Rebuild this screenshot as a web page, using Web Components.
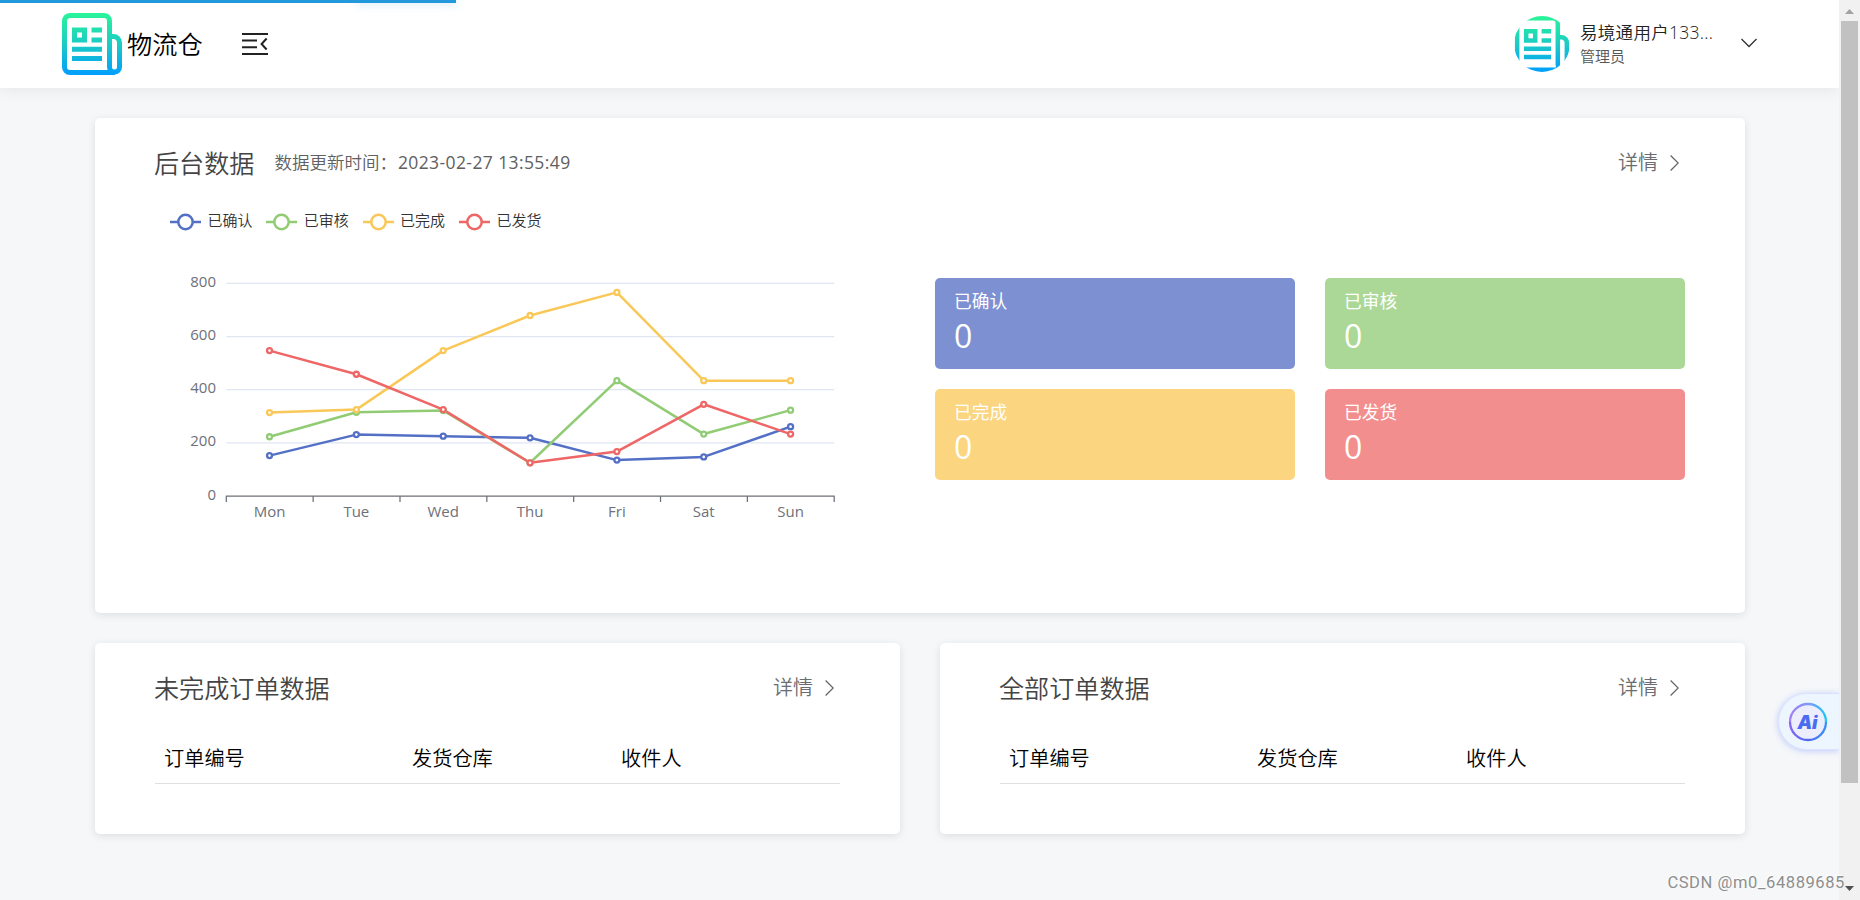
<!DOCTYPE html>
<html lang="zh-CN">
<head>
<meta charset="utf-8">
<title>物流仓</title>
<style>
  html, body {
    margin: 0;
    height: 100%;
  }
  body {
    overflow: hidden;
    background: #f5f7f9;
    color: #000;
    font-family: "Open Sans", "Noto Sans CJK SC", sans-serif;
    font-weight: 350;
    font-size: 20px;
  }
</style>
</head>
<body>
<wh-app></wh-app>

<script>
class WhLogo extends HTMLElement {
  constructor() {
    super();
    this.attachShadow({ mode: 'open' });
  }

  connectedCallback() {
    this.shadowRoot.innerHTML = `
      <style>
        :host {
          display: block;
          flex: none;
          overflow: hidden;
        }
        svg {
          display: block;
          width: 100%;
          height: 100%;
        }
      </style>
      <svg viewBox="${this.getAttribute('box') || '0 0 60 62'}">
        <defs>
          <linearGradient id="g" gradientUnits="userSpaceOnUse" x1="0" y1="0" x2="0" y2="62">
            <stop offset="0" stop-color="#2af598"/>
            <stop offset="0.5" stop-color="#1ccbc5"/>
            <stop offset="1" stop-color="#009efd"/>
          </linearGradient>
        </defs>
        <g fill="none" stroke="url(#g)" stroke-width="5">
          <path d="M47.5 59.5H8a5.5 5.5 0 0 1-5.5-5.5V8A5.5 5.5 0 0 1 8 2.5H42a5.5 5.5 0 0 1 5.5 5.5V54a5 5 0 0 0 10 0V29.5a6 6 0 0 0-6-6H47.5"/>
          <path d="M45 59.5H53"/>
        </g>
        <path fill="url(#g)" fill-rule="evenodd" d="M10 14.5H25V29.5H10ZM15 19.5V24.5H20V19.5ZM29.5 14.5H40V19.5H29.5ZM29.5 24.5H40V29.5H29.5ZM10 33.7H40V38.7H10ZM10 43H40V48H10Z"/>
      </svg>
    `;
  }
}

class WhHeader extends HTMLElement {
  constructor() {
    super();
    this.attachShadow({ mode: 'open' });
  }

  connectedCallback() {
    this.shadowRoot.innerHTML = `
      <style>
        :host {
          display: block;
          height: 88px;
          background: #fff;
          box-shadow: 0 2px 15px rgba(0, 0, 0, 0.07);
        }
        header {
          display: flex;
          align-items: center;
          height: 100%;
          box-sizing: border-box;
          padding: 0 82px 0 62px;
        }
        .logo {
          width: 60px;
          height: 62px;
        }
        .name {
          width: 75px;
          margin-left: 5px;
          font-size: 25.2px;
          line-height: 30px;
          white-space: nowrap;
        }
        .menu {
          margin-left: 40px;
          margin-top: -1px;
        }
        .user {
          display: flex;
          align-items: center;
          margin-left: auto;
        }
        .avatar {
          width: 56px;
          height: 56px;
          border-radius: 50%;
        }
        .info {
          width: 132px;
          margin: 0 29px 0 10px;
          white-space: nowrap;
        }
        .nick {
          font-size: 17.5px;
          line-height: 24px;
          letter-spacing: 0.3px;
          color: #222;
        }
        .role {
          font-size: 15px;
          line-height: 24px;
          color: #555;
        }
        .arrow {
          margin-top: -2px;
        }
      </style>
      <header>
        <wh-logo class="logo"></wh-logo>
        <span class="name">物流仓</span>
        <svg class="menu" width="26" height="24" viewBox="0 0 26 24" fill="none" stroke="#222" stroke-width="2">
          <path d="M0 2H26M0 8.5H15M0 15.3H15M0 22H26"/>
          <path d="M24.6 6.5L19.6 12L24.6 17.5"/>
        </svg>
        <div class="user">
          <wh-logo class="avatar" box="-1 0 62 62"></wh-logo>
          <div class="info">
            <div class="nick">易境通用户133...</div>
            <div class="role">管理员</div>
          </div>
          <svg class="arrow" width="16" height="10" viewBox="0 0 16 10" fill="none" stroke="#333" stroke-width="1.3">
            <path d="M.5 1L8 8.5L15.5 1"/>
          </svg>
        </div>
      </header>
    `;
  }
}

class WhCard extends HTMLElement {
  constructor() {
    super();
    this.attachShadow({ mode: 'open' });
  }

  connectedCallback() {
    this.shadowRoot.innerHTML = `
      <style>
        :host {
          display: block;
          box-sizing: border-box;
          padding: 29px 60px 0;
          background: #fff;
          border-radius: 5px;
          box-shadow: 0 2px 8px rgba(0, 0, 0, 0.1);
        }
        .head {
          display: flex;
          align-items: center;
          height: 32px;
        }
        h2 {
          margin: 0 1px 0 -1px;
          font-size: 25.1px;
          font-weight: inherit;
          line-height: 32px;
          color: #444;
        }
        .more {
          display: flex;
          align-items: center;
          gap: 12px;
          margin-left: auto;
          padding-right: 6px;
          line-height: 34px;
          color: #6b6d71;
        }
        .more svg {
          margin-top: -1px;
        }
      </style>
      <div class="head">
        <h2>${this.getAttribute('heading')}</h2>
        <slot name="note"></slot>
        <div class="more">
          <span>详情</span>
          <svg width="9" height="16" viewBox="0 0 9 16" fill="none" stroke="#606266" stroke-width="1.2">
            <path d="M.6 .5L8.2 8L.6 15.5"/>
          </svg>
        </div>
      </div>
      <slot></slot>
    `;
  }
}

const SERIES = [
  { name: '已确认', color: '#5470c6', data: [152, 231, 225, 219, 135, 147, 261] },
  { name: '已审核', color: '#91cc75', data: [223, 315, 322, 125, 434, 233, 323] },
  { name: '已完成', color: '#fac858', data: [314, 325, 547, 679, 766, 434, 434] },
  { name: '已发货', color: '#ee6666', data: [547, 458, 325, 125, 167, 345, 233] }
];
const DAYS = ['Mon', 'Tue', 'Wed', 'Thu', 'Fri', 'Sat', 'Sun'];

class WhLineChart extends HTMLElement {
  constructor() {
    super();
    this.attachShadow({ mode: 'open' });
  }

  connectedCallback() {
    const left = 71.3;
    const right = 679.2;
    const base = 256;
    const step = (right - left) / DAYS.length;
    const px = i => left + step * (i + 0.5) - 0.2;
    const py = v => base - v * 0.2658;

    const grid = [0, 200, 400, 600, 800].map(v => {
      const y = py(v);
      const line = v ? `<path d="M${left} ${y}H${right}" stroke="#e0e6f1" stroke-width="1.25"/>` : '';
      return `${line}<text x="61" y="${y + 3.5}" text-anchor="end">${v}</text>`;
    }).join('');

    const ticks = DAYS.concat('').map((d, i) => `M${left + step * i} ${base}v6`).join('');
    const labels = DAYS.map((d, i) => `<text x="${px(i)}" y="277" text-anchor="middle">${d}</text>`).join('');

    const lines = SERIES.map(s => `
      <polyline fill="none" stroke="${s.color}" stroke-width="2.5" stroke-linejoin="bevel"
        points="${s.data.map((v, i) => `${px(i)},${py(v)}`).join(' ')}"/>
    `).join('');
    const dots = SERIES.map(s => s.data.map((v, i) =>
      `<circle cx="${px(i)}" cy="${py(v)}" r="2.5" fill="#fff" stroke="${s.color}" stroke-width="2.3"/>`
    ).join('')).join('');

    this.shadowRoot.innerHTML = `
      <style>
        :host {
          display: block;
        }
        .legend {
          display: flex;
          gap: 13.3px;
          padding: 30px 0 0 15px;
          font-size: 15px;
          line-height: 20px;
          color: #333;
        }
        .item {
          display: flex;
          align-items: center;
          gap: 6.5px;
          width: 83px;
          white-space: nowrap;
        }
        .item svg {
          flex: none;
          margin-top: 4px;
        }
        .plot {
          display: block;
          margin-top: 9px;
          font-size: 15px;
          font-weight: 400;
          fill: #6e7079;
        }
      </style>
      <div class="legend">
        ${SERIES.map(s => `
          <div class="item">
            <svg width="31" height="18" viewBox="0 0 31 18" fill="#fff" stroke="${s.color}" stroke-width="2.5">
              <path d="M0 9H31"/>
              <circle cx="15.5" cy="9" r="7.2"/>
            </svg>
            <span>${s.name}</span>
          </div>
        `).join('')}
      </div>
      <svg class="plot" width="700" height="300">
        ${grid}
        <path d="M${left - 0.5} ${base}H${right + 0.5}${ticks}" fill="none" stroke="#6e7079" stroke-width="1.25"/>
        ${labels}
        ${lines}
        ${dots}
      </svg>
    `;
  }
}

class WhStat extends HTMLElement {
  constructor() {
    super();
    this.attachShadow({ mode: 'open' });
  }

  connectedCallback() {
    this.shadowRoot.innerHTML = `
      <style>
        :host {
          display: block;
          box-sizing: border-box;
          height: 91px;
          padding: 10px 19px 0;
          border-radius: 5px;
          color: #fff;
        }
        .label {
          font-size: 17.7px;
          font-weight: 400;
          line-height: 26px;
        }
        .value {
          font-size: 32px;
          font-weight: 400;
          line-height: 43px;
        }
      </style>
      <div class="label">${this.getAttribute('label')}</div>
      <div class="value"><slot></slot></div>
    `;
  }
}

class WhOrderTable extends HTMLElement {
  constructor() {
    super();
    this.attachShadow({ mode: 'open' });
  }

  connectedCallback() {
    this.shadowRoot.innerHTML = `
      <style>
        :host {
          display: block;
          margin-top: 28px;
        }
        .row {
          display: grid;
          grid-template-columns: 248px 209px 1fr;
          height: 51px;
          font-size: 20.2px;
          line-height: 52px;
          border-bottom: 1px solid #dfdfdf;
        }
        .row span {
          padding-left: 9px;
        }
      </style>
      <div class="row">
        <span>订单编号</span>
        <span>发货仓库</span>
        <span>收件人</span>
      </div>
    `;
  }
}

class WhAssistant extends HTMLElement {
  constructor() {
    super();
    this.attachShadow({ mode: 'open' });
  }

  connectedCallback() {
    this.shadowRoot.innerHTML = `
      <style>
        :host {
          display: flex;
          align-items: center;
          box-sizing: border-box;
          width: 61px;
          height: 57px;
          padding-left: 9px;
          border: 1px solid #d9e3ff;
          border-right: 0;
          border-radius: 29px 0 0 29px;
          background: #edf5fe;
          box-shadow: 0 1px 6px rgba(90, 120, 255, 0.35);
          clip-path: inset(-12px 0 -12px -12px);
        }
      </style>
      <svg width="40" height="40" viewBox="0 0 40 40">
        <defs>
          <linearGradient id="a" x1="0" y1="0.2" x2="1" y2="0.3">
            <stop offset="0" stop-color="#a77bf3"/>
            <stop offset="0.5" stop-color="#7d9cf5"/>
            <stop offset="1" stop-color="#22c3f3"/>
          </linearGradient>
          <linearGradient id="b" x1="0" y1="0" x2="1" y2="0">
            <stop offset="0" stop-color="#8468f5"/>
            <stop offset="0.5" stop-color="#5068f0"/>
            <stop offset="1" stop-color="#3c91f2"/>
          </linearGradient>
        </defs>
        <circle cx="20" cy="20" r="18" fill="#edeefd"/>
        <path d="M2 20a18 18 0 0 1 36 0" fill="none" stroke="url(#a)" stroke-width="2.3"/>
        <path d="M2 20a18 18 0 0 0 36 0" fill="none" stroke="url(#b)" stroke-width="2.3"/>
        <text x="19.5" y="27" text-anchor="middle" font-family="Inter, sans-serif" font-size="18.5" font-weight="900" font-style="italic" fill="#4a6cf0">Ai</text>
      </svg>
    `;
  }
}

class WhScrollbar extends HTMLElement {
  constructor() {
    super();
    this.attachShadow({ mode: 'open' });
  }

  connectedCallback() {
    this.shadowRoot.innerHTML = `
      <style>
        :host {
          display: flex;
          flex-direction: column;
          align-items: center;
          background: #f1f1f1;
        }
        .thumb {
          width: 17px;
          height: 762px;
          background: #c1c1c1;
        }
        .down {
          margin-top: auto;
        }
      </style>
      <svg width="21" height="21"><path d="M6 14L10.5 9L15 14Z" fill="#a3a3a3"/></svg>
      <div class="thumb"></div>
      <svg class="down" width="21" height="21"><path d="M6 7L10.5 12L15 7Z" fill="#505050"/></svg>
    `;
  }
}

class WhApp extends HTMLElement {
  constructor() {
    super();
    this.attachShadow({ mode: 'open' });
  }

  connectedCallback() {
    this.shadowRoot.innerHTML = `
      <style>
        :host {
          display: grid;
          grid-template-columns: 1fr 21px;
          height: 100vh;
          overflow: hidden;
        }
        .page {
          min-width: 0;
        }
        main {
          display: grid;
          grid-template-columns: 1fr 1fr;
          grid-template-rows: 495px 191px;
          gap: 30px 40px;
          padding: 30px 94px 0 95px;
        }
        .wide {
          grid-column: 1 / -1;
        }
        .note {
          margin-left: 19px;
          margin-top: -2px;
          font-size: 17.5px;
          line-height: 32px;
          color: #606060;
        }
        .time {
          margin-left: 1px;
          font-weight: 400;
          letter-spacing: 0.4px;
        }
        .overview {
          display: flex;
          justify-content: space-between;
          align-items: flex-start;
        }
        .stats {
          display: grid;
          grid-template-columns: 360px 360px;
          gap: 20px 30px;
          margin-top: 99px;
        }
        .progress {
          position: absolute;
          top: 0;
          left: 0;
          width: 456px;
          height: 3px;
          background: #2299dd;
        }
        .peg {
          position: absolute;
          top: 0;
          left: 356px;
          width: 100px;
          height: 3px;
          box-shadow: 0 0 10px rgba(34, 153, 221, 0.4);
        }
        wh-assistant {
          position: absolute;
          top: 693px;
          right: 21px;
        }
        .mark {
          position: absolute;
          right: 15px;
          bottom: 7px;
          font: 400 16.5px/20px Roboto, sans-serif;
          letter-spacing: 0.6px;
          color: #8e8e8e;
          text-shadow: -1px -1px 0 #fff;
        }
      </style>
      <div class="page">
        <wh-header></wh-header>
        <main>
          <wh-card class="wide" heading="后台数据">
            <div class="note" slot="note">数据更新时间：<span class="time">2023-02-27 13:55:49</span></div>
            <div class="overview">
              <wh-line-chart></wh-line-chart>
              <div class="stats">
                <wh-stat label="已确认" style="background: #7c90d2">0</wh-stat>
                <wh-stat label="已审核" style="background: #abd897">0</wh-stat>
                <wh-stat label="已完成" style="background: #fbd57f">0</wh-stat>
                <wh-stat label="已发货" style="background: #f28e8e">0</wh-stat>
              </div>
            </div>
          </wh-card>
          <wh-card heading="未完成订单数据">
            <wh-order-table></wh-order-table>
          </wh-card>
          <wh-card heading="全部订单数据">
            <wh-order-table></wh-order-table>
          </wh-card>
        </main>
      </div>
      <wh-scrollbar></wh-scrollbar>
      <div class="peg"></div>
      <div class="progress"></div>
      <wh-assistant></wh-assistant>
      <div class="mark">CSDN @m0_64889685</div>
    `;
  }
}

customElements.define('wh-logo', WhLogo);
customElements.define('wh-header', WhHeader);
customElements.define('wh-card', WhCard);
customElements.define('wh-line-chart', WhLineChart);
customElements.define('wh-stat', WhStat);
customElements.define('wh-order-table', WhOrderTable);
customElements.define('wh-assistant', WhAssistant);
customElements.define('wh-scrollbar', WhScrollbar);
customElements.define('wh-app', WhApp);
</script>
</body>
</html>
